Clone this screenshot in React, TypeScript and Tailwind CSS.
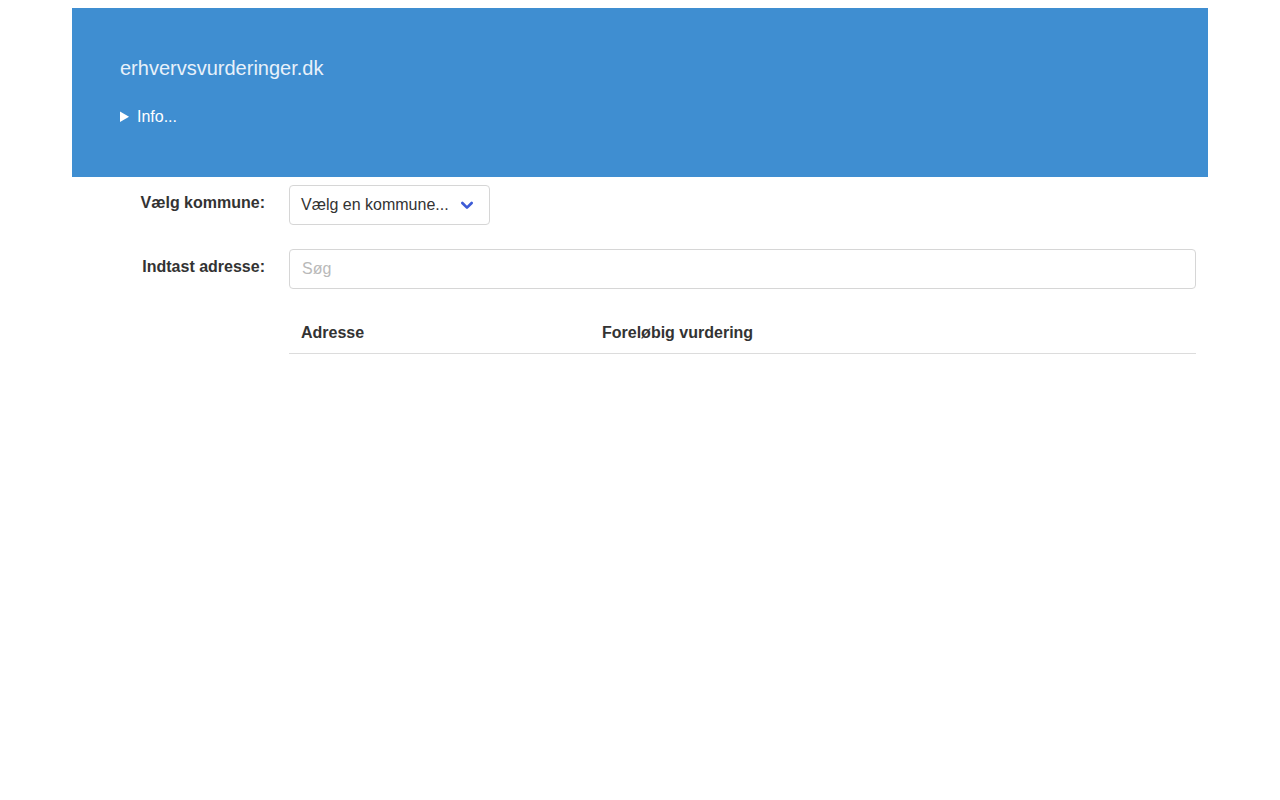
import React from "react";

export default function App() {
  return (
    <div className="min-h-[800px] bg-white pt-2 text-[#333333]" style={{ fontFamily: '"Liberation Sans", Arial, sans-serif' }}>
      <div className="mx-[72px]">
        <header className="bg-[#3f8ed1] px-12 pt-12 pb-12">
          <h1 className="text-[20px] leading-6 text-[#e8f1fa] font-normal">erhvervsvurderinger.dk</h1>
          <details className="mt-[25px] text-white text-base leading-6">
            <summary className="cursor-pointer">Info...</summary>
          </details>
        </header>
        <div className="px-3 pt-2">
          <div className="flex gap-6">
            <label className="w-[181px] shrink-0 text-right font-bold pt-[6px] leading-6">Vælg kommune:</label>
            <div>
              <button className="flex h-10 items-center gap-[10px] rounded border border-[#d6d6d6] bg-white pl-[11px] pr-[14px] text-base text-[#333333]">
                <span>Vælg en kommune...</span>
                <svg width="16" height="16" viewBox="0 0 24 24" fill="none" stroke="#3d5bd6" strokeWidth="4" strokeLinecap="round" strokeLinejoin="round">
                  <polyline points="5 9 12 16 19 9" />
                </svg>
              </button>
            </div>
          </div>
          <div className="mt-6 flex gap-6">
            <label className="w-[181px] shrink-0 text-right font-bold pt-[6px] leading-6">Indtast adresse:</label>
            <div className="flex-1">
              <input
                className="h-10 w-full rounded border border-[#d6d6d6] px-3 text-base outline-none placeholder:text-[#b9b9b9]"
                placeholder="Søg"
              />
              <table className="mt-6 w-full border-collapse text-left">
                <thead>
                  <tr className="border-b border-[#dcdcdc]">
                    <th className="w-[301px] px-3 py-2 font-bold leading-6">Adresse</th>
                    <th className="px-3 py-2 font-bold leading-6">Foreløbig vurdering</th>
                  </tr>
                </thead>
                <tbody></tbody>
              </table>
            </div>
          </div>
        </div>
      </div>
    </div>
  );
}
